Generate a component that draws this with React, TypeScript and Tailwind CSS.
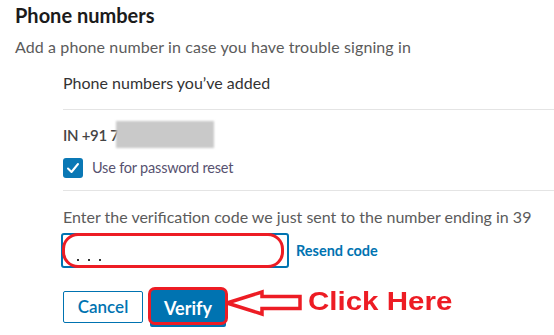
import React from "react";

export default function App() {
  return (
    <div className="w-[554px] h-[335px] bg-white overflow-hidden font-['Lato',sans-serif]">
      <div className="pl-[15px]">
        <h2 className="pt-[1px] text-[20px] leading-[28px] font-bold text-[#1b1b1b]">Phone numbers</h2>
        <p className="mt-[6px] text-[16px] leading-[24px] text-[#5b5b5b] tracking-[0.1px]">
          Add a phone number in case you have trouble signing in
        </p>
      </div>
      <div className="ml-[63px]">
        <div className="mt-[12px] mb-[14px] text-[16px] leading-[24px] text-[#333333]">
          Phone numbers you’ve added
        </div>
        <div className="h-px bg-[#e4e4e4]" />
        <div className="mt-[11px] flex items-center h-[27px]">
          <span className="text-[15px] leading-[24px] font-semibold text-[#444444] tracking-[-0.3px]">IN +91 7</span>
          <div className="ml-[-3px] w-[98px] h-[27px] bg-[#c9c9c9] blur-[1px]" />
        </div>
        <div className="mt-[10px] flex items-center h-[20px]">
          <div className="w-[20px] h-[20px] rounded-[3px] bg-[#0a78b5] flex items-center justify-center">
            <svg width="14" height="14" viewBox="0 0 14 14" fill="none">
              <path d="M2 7.5 L5.5 11 L12 3" stroke="white" strokeWidth="2" strokeLinecap="round" strokeLinejoin="round" />
            </svg>
          </div>
          <span className="ml-[9px] text-[14.5px] leading-[20px] text-[#575270] tracking-[-0.2px]">Use for password reset</span>
        </div>
        <div className="mt-[12px] h-px bg-[#e4e4e4]" />
        <div className="mt-[14px] text-[16px] leading-[24px] text-[#5b5b5b]">
          Enter the verification code we just sent to the number ending in 39
        </div>
        <div className="mt-[4px] flex items-center">
          <div className="relative ml-[-2px] w-[228px] h-[35px] rounded-[3px] border-2 border-[#0073b1] flex items-end pl-[14px] pb-[5px] gap-[9px]">
            <span className="w-[2px] h-[2px] bg-[#333]" />
            <span className="w-[2px] h-[2px] bg-[#333]" />
            <span className="w-[2px] h-[2px] bg-[#333]" />
            <div className="absolute left-[-1px] top-[-2px] w-[222px] h-[35px] rounded-[16px] border-[3.5px] border-[#ed1c24] bg-transparent" />
          </div>
          <span className="ml-[7px] text-[14.5px] font-bold text-[#0073b1]">Resend code</span>
        </div>
        <div className="mt-[19px] flex items-start">
          <div className="mt-[4px] w-[80px] h-[32px] rounded-[2px] border border-[#0073b1] flex items-center justify-center text-[17px] font-semibold text-[#0073b1]">
            Cancel
          </div>
          <div className="relative ml-[5px] w-[80px] h-[40px] pt-[2px] px-[2px]">
            <div className="h-[38px] rounded-[2px] bg-[#0073b1] flex items-center justify-center text-[18px] font-bold text-white">
              Verify
            </div>
            <div className="absolute left-0 right-0 top-0 bottom-[2px] rounded-[7px] border-[3.5px] border-[#ed1c24]" />
          </div>
          <svg className="mt-[2px] ml-[-4px]" width="80" height="28" viewBox="0 0 80 28">
            <polygon
              points="3,14 38,3 38,7.5 76,7.5 76,19.5 38,19.5 38,25"
              fill="white"
              stroke="#ed1c24"
              strokeWidth="3.5"
              strokeLinejoin="miter"
            />
          </svg>
          <span className="mt-[2px] ml-[4px] origin-left scale-x-[1.18] text-[25px] leading-[25px] font-bold text-[#ed1c24] font-['Liberation_Sans',Arial,sans-serif] whitespace-nowrap">
            Click Here
          </span>
        </div>
      </div>
    </div>
  );
}
